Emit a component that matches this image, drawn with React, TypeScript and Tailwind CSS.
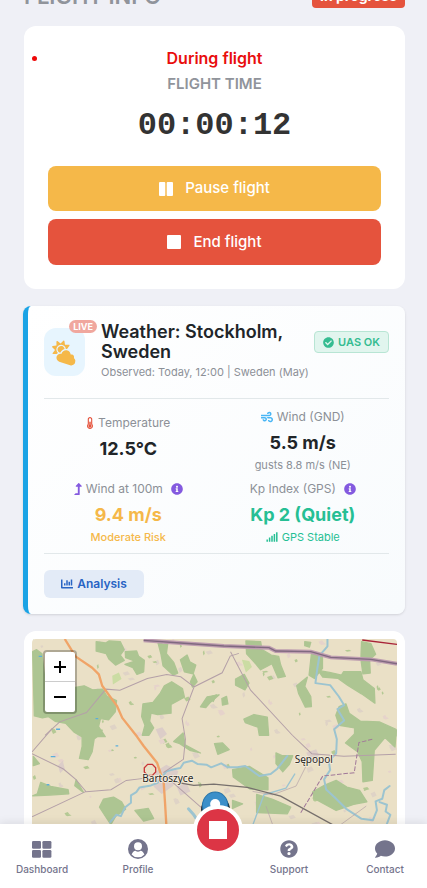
import React from "react";
import {
  FaChartBar,
  FaCheckCircle,
  FaCloudSun,
  FaComment,
  FaInfoCircle,
  FaLevelUpAlt,
  FaQuestionCircle,
  FaSignal,
  FaThermometerHalf,
  FaWind,
} from "react-icons/fa";

// Small woods and farm plots scattered over the base map
const specks = Array.from({ length: 170 }, (_, i) => ({
  x: (i * 397 + (i % 7) * 61) % 1085,
  y: (i * 211 + (i % 11) * 37) % 555,
  w: 4 + ((i * 13) % 12),
  h: 4 + ((i * 7) % 9),
  fill: i % 3 === 0 ? "#b4c994" : i % 3 === 1 ? "#e6d3cb" : "#dfd3c6",
}));

const MapView = () => (
  <svg viewBox="0 0 1092 900" className="block w-full" role="img" aria-label="Flight area map">
    <rect width="1092" height="900" fill="#eae0c6" />
    {specks.map((s, i) => (
      <path
        key={i}
        d={`M${s.x} ${s.y}l${s.w} ${-s.h / 2}l${s.w / 2} ${s.h}l${-s.w} ${s.h / 2}z`}
        fill={s.fill}
      />
    ))}

    {/* Forests */}
    <g fill="#adc592" stroke="#adc592" strokeWidth="4" strokeLinejoin="round">
      <g transform="translate(-36 -42)">
        <path d="M38 80l12-6 16 12 10 90-4 80 30-10 6-60 40 4 44-8 25 12 30-2 14 22 28 12-4 34-20 24-24-4-6 24 20 30-70 0-24-14-24-26-32-6-20-14-18 4-24-6z" />
        <path d="M228 50l28 4 10-6 34 2 12 24-12 16 12 16-26 14-20-18-8-16-30-8zM315 80l34-2 6 16 17 12-2 34-20 8-12-20-24-10 30-10-28-10zM412 50l16 8 14-2-4 30 22 26 12 32-14 6-30-28-6-34zM480 104l20-14 8 20 18 10-8 26-26-6zM420 204l12-22 22-12 32 20 6 26-40 22 0 26-40 4-20-4-4 24 12 20-14 22-20 0 8-30-10-26 4-38 30-4zM540 245l20-30 36-6-26 22-14 16zM510 170l10-22 10 22-14 16z" />
      </g>
      <g transform="translate(534 -42)">
        <path d="M106 48l44 2 4 24 28 16 22 4 6 26 14 34-22 4-18-42-34 18-20-24-22-24zM302 86l33 0 0 44-24 30-16-10zM258 182l32-26-8 28 18 30 2 30-18 2-20-40zM322 136l34 6 36 8 6-10 52 0 6 24 34 26 2 44-40-28-42-26-28-20-46-4zM452 50l28 6 14 32-18 16 2 40-22 2-6-44zM75 162l26-14 14 26-12 20-28-14zM100 282l30-14 40 8 4 54-28 0-4-24-38-14zM385 244l20-8 10 28 34 24 56 2 50 22 0 20-124 0 0-24-46-8-10-30zM0 215l18-6-10 20zM282 50l18 2-4 14-14-4zM34 220l14-6 4 22-16 4z" />
      </g>
      <g transform="translate(-96 273)">
        <path d="M246 0l60 0-6 12-18 14-6 38-12 24-26-4 8-36zM100 78l18 22-18 6zM112 190l10-34 30 12 52 10 2 12-56 4-52 2zM228 148l22 38-26-20zM310 206l30-6 24 14 12 22-30 22-14 24-20-30-14-22zM404 240l40-6 16 30-30 8zM520 34l28-26 6 36 46 24-32-8-30-20z" />
      </g>
      <g transform="translate(540 273)">
        <path d="M60 118l50-10 56 34 0 36-54-2-50-36zM190 68l18 8 32 0-10 26-20 22-20-24zM300 184l36-20 34-14 32 20 38 10 22 34-40 8-52 18-66-36zM398 38l38-38 114 0-4 50-30-28-32 38-6 90-28 4-2-60-14-30zM132 192l46 14 56 24-10 20-92-4zM60 210l30 10-30 14zM6 40l24-2 20 20-34 14z" />
      </g>
    </g>
    <path d="M240 110l20-10 8 20-26 16zM628 62l22 4 8 18-18 16z" fill="#cbdca3" />

    {/* Built-up areas */}
    <g fill="#dccdc8">
      <path d="M368 398l34-22 36 20-16 44-34 24-24-22zM432 440l30-10 12 26-30 12zM820 340l30-10 14 28-26 12zM370 270l20-6 14 20-20 16zM78 378l14-14 6 24-14 14z" />
    </g>

    {/* Rivers */}
    <g fill="none" stroke="#9cc4d0" strokeWidth="6" strokeLinejoin="round" strokeLinecap="round">
      <path d="M884 0l0 22-24 28-6 36-6 46 44 6 26 34 16 26-20 12 20 34-30 26 8 30-2 42-22 24 4 26-18 28 6 30 26 24 34 34 46 30 34 4 12-30-4-26 20-8 6-26 16-12" />
      <path d="M1040 488l22 8-4 20 14 10-12 32" />
      <path d="M234 548l18-22 14 4 12-26 18-14 0-22 16-10 10-14 34-6 20-8 26-34 22-6 20-4 10-16 24-6 18 10 26 2 14 8 30-12 20 12 28 0 24-4 20 14 22 16 34-6 20-16 30-38" />
      <path d="M786 404l-26 42-66 20-34 92" strokeWidth="4" />
      <path d="M468 508l16 18 8 12" strokeWidth="9" />
    </g>
    <path d="M20 52h10M190 238h8M72 270h12M56 352h14M44 436h8M250 320h8" stroke="#5caedb" strokeWidth="4" />

    {/* Local roads */}
    <g fill="none" stroke="#b4a0a8" strokeWidth="3">
      <path d="M39 288l44-40 80-28 58-70 42 3 82-35 58-12 42 7 40 30 84-42 24-50 26-8M485 143l-36 95 10 62-6 60-60 40" />
      <path d="M594 38l60 115 125 135 58 55 96 8 155-6M0 343l94 46 36 30 32 38 74-6 46-28 52-6M0 532l162-76M404 414l100 88 110 40M0 338l60-70" />
      <path d="M660 456l60 10 70-26 40-80M700 500l20 56M1000 500l-80 58" strokeWidth="2" />
      <path d="M804 520l66-110 94-10 14-90 40-10" stroke="#a17899" strokeDasharray="14 5" />
    </g>
    <path d="M404 424l80 14 60-4 100 10 100 26 160 88" fill="none" stroke="#77706d" strokeWidth="4" />

    {/* Border strip along the north edge */}
    <path d="M334 4l110 8 130 9 135 5 20 10 105 2 60 17 120 6 78 13" fill="none" stroke="#bd9caf" strokeWidth="12" />
    <path d="M334 4l110 8 130 9 135 5 20 10 105 2 60 17 120 6 78 13" fill="none" stroke="#806980" strokeWidth="4" />
    <path d="M988 3l104 13" stroke="#a82338" strokeWidth="4" />

    {/* Main road */}
    <path
      d="M98 0l32 52 50 34 20 20 10 34 44 60 16 36 44 56 20 28 40 50 20 60 4 60 4 68"
      fill="none"
      stroke="#f0a468"
      strokeWidth="7"
      strokeLinejoin="round"
    />
    <path d="M346 375h14l10 10v13l-10 10h-14l-10-10v-13z" fill="none" stroke="#cb3538" strokeWidth="4" />

    <g fontFamily="Noto Sans, sans-serif" fontSize="30" fill="#272522" stroke="#f5eddf" strokeWidth="5" paintOrder="stroke">
      <text x="330" y="428">Bartoszyce</text>
      <text x="786" y="370">Sępopol</text>
    </g>

    {/* Pilot marker */}
    <path d="M506 510a43 43 0 0 1 86 0l-4 30h-78z" fill="#15252e" />
    <path d="M548 580c-14-30-38-48-38-82a38 40 0 0 1 76 0c0 34-24 52-38 82z" fill="#3b8fc9" stroke="#2673a8" strokeWidth="3" />
    <circle cx="548" cy="494" r="15" fill="#fff" />
  </svg>
);

const DashboardIcon = () => (
  <svg viewBox="0 0 20 17" className="h-[17px] w-5" fill="currentColor">
    <rect width="9" height="7.7" rx="1.3" />
    <rect x="10.4" width="9" height="7.7" rx="1.3" />
    <rect y="9" width="9" height="7.7" rx="1.3" />
    <rect x="10.4" y="9" width="9" height="7.7" rx="1.3" />
  </svg>
);

const ProfileIcon = () => (
  <svg viewBox="0 0 20 20" className="h-5 w-5">
    <circle cx="10" cy="10" r="10" fill="currentColor" />
    <path d="M3.6 15.4C4.5 13 6 12 7.5 11.7a4 4 0 0 0 5 0c1.5.3 3 1.3 3.9 3.7A8.4 8.4 0 0 1 3.6 15.4z" fill="#fff" />
    <circle cx="10" cy="7.3" r="4" fill="#fff" />
  </svg>
);

const navItems = [
  { href: "#dashboard", label: "Dashboard", icon: <DashboardIcon /> },
  { href: "#profile", label: "Profile", icon: <ProfileIcon /> },
  { href: "#support", label: "Support", icon: <FaQuestionCircle className="h-[18px] w-[18px]" /> },
  { href: "#contact", label: "Contact", icon: <FaComment className="h-5 w-5" /> },
];

const NavLink = ({ item }: { item: (typeof navItems)[number] }) => (
  <a href={item.href} className="flex w-[84px] flex-col items-center gap-0.5 text-[#74748c]">
    <span className="flex h-5 items-center">{item.icon}</span>
    <span className="text-[10px] leading-4 font-medium">{item.label}</span>
  </a>
);

const App = () => {
  return (
    <div className="flex h-screen flex-col overflow-hidden bg-[#eff0f6] font-['Inter',sans-serif] text-[#212529]">
      <main className="-mt-5 min-h-0 flex-1 overflow-hidden pr-[22px] pl-6">
        <header className="flex h-7 items-end justify-between">
          <h1 className="text-[22px] leading-6 font-semibold text-[#90949b]">FLIGHT INFO</h1>
          <span className="rounded bg-[#e5533d] px-2 pt-1.5 pb-0.5 text-sm leading-5 font-bold text-white">In progress</span>
        </header>

        {/* Flight timer */}
        <section className="relative mt-[18px] rounded-xl bg-white px-6 pt-5 pb-6 text-center">
          <span className="absolute top-[30px] left-2 h-[5px] w-[5px] rounded-full bg-[#ee0808]" />
          <p className="text-base leading-6 font-semibold text-[#e90d0d]">During flight</p>
          <h2 className="mt-0.5 text-[15px] leading-6 font-semibold text-[#90949b]">FLIGHT TIME</h2>
          <p className="mt-[10px] font-['Liberation_Mono',monospace] text-[32px] leading-10 font-bold text-[#333]">00:00:12</p>
          <div className="mt-5 flex flex-col gap-2">
            <button className="flex h-[45px] items-center justify-center gap-3 rounded-lg bg-[#f5b849] text-[15px] font-medium text-white">
              <svg viewBox="0 0 14 14" className="h-3.5 w-3.5" fill="currentColor">
                <rect width="6.3" height="14" rx="1" />
                <rect x="7.7" width="6.3" height="14" rx="1" />
              </svg>
              Pause flight
            </button>
            <button className="flex h-[46px] items-center justify-center gap-3 rounded-lg bg-[#e5533d] text-[15px] font-medium text-white">
              <svg viewBox="0 0 14 14" className="h-3.5 w-3.5" fill="currentColor">
                <rect width="14" height="14" rx="1" />
              </svg>
              End flight
            </button>
          </div>
        </section>

        {/* Weather */}
        <section className="mt-[17px] -ml-px rounded-lg border-l-[5px] border-[#1aa3e5] bg-gradient-to-br from-white to-[#f8fbfd] p-4 shadow-sm">
          <div className="flex items-center pb-4">
            <div className="relative flex h-12 w-[41px] shrink-0 items-center justify-center rounded-xl bg-[#e7f5fe]">
              <FaCloudSun className="h-6 w-[27px] rotate-[18deg] text-[#f5b849]" />
              <span className="absolute -top-2 -right-3 rounded-full bg-[#f0a79e] px-1 text-[9px] leading-[13px] font-bold text-white">
                LIVE
              </span>
            </div>
            <div className="ml-4 min-w-0 flex-1">
              <div className="flex items-center justify-between">
                <h3 className="text-lg leading-5 font-semibold">
                  Weather: Stockholm,
                  <br />
                  Sweden
                </h3>
                <span className="flex h-[22px] shrink-0 items-center gap-1 rounded border border-[#b8e5d4] bg-[#e1f5ee] px-2 text-[11px] font-semibold text-[#35bc91]">
                  <FaCheckCircle className="h-[11px] w-[11px]" />
                  UAS OK
                </span>
              </div>
              <p className="text-[11px] leading-5 whitespace-nowrap text-[#8c9097]">Observed: Today, 12:00 | Sweden (May)</p>
            </div>
          </div>

          <div className="grid grid-cols-2 gap-y-2 border-y border-[#e2e8ea] pt-2 pb-[10px] text-center">
            <div className="flex flex-col justify-center pr-1">
              <p className="flex items-center justify-center gap-1 text-xs leading-5 text-[#8c9097]">
                <FaThermometerHalf className="h-3 w-2 text-[#e5533d]" />
                Temperature
              </p>
              <p className="text-lg leading-8 font-bold">12.5°C</p>
            </div>
            <div>
              <p className="flex items-center justify-center gap-1 text-xs leading-5 text-[#8c9097]">
                <FaWind className="h-3 w-3 text-[#49b6f5]" />
                Wind (GND)
              </p>
              <p className="text-lg leading-8 font-bold">5.5 m/s</p>
              <p className="text-[11px] leading-3 text-[#8c9097]">gusts 8.8 m/s (NE)</p>
            </div>
            <div className="pr-1">
              <p className="flex items-center justify-center gap-1 text-xs leading-5 text-[#8c9097]">
                <FaLevelUpAlt className="h-3 w-2 text-[#845adf]" />
                Wind at 100m
                <FaInfoCircle className="ml-1 h-3 w-3 text-[#845adf]" />
              </p>
              <p className="text-lg leading-8 font-bold text-[#f5b849]">9.4 m/s</p>
              <p className="text-[11px] leading-3 font-medium text-[#f5b849]">Moderate Risk</p>
            </div>
            <div>
              <p className="flex items-center justify-center gap-1 text-xs leading-5 text-[#8c9097]">
                Kp Index (GPS)
                <FaInfoCircle className="ml-1 h-3 w-3 text-[#845adf]" />
              </p>
              <p className="text-lg leading-8 font-bold text-[#26bf94]">Kp 2 (Quiet)</p>
              <p className="flex items-center justify-center gap-1 text-[11px] leading-3 text-[#26bf94]">
                <FaSignal className="h-[10px] w-3" />
                GPS Stable
              </p>
            </div>
          </div>

          <button className="mt-4 flex h-7 w-[100px] items-center justify-center gap-1 rounded-md bg-[#e3ebf7] text-xs font-semibold text-[#2864c4]">
            <FaChartBar className="h-3 w-3" />
            Analysis
          </button>
        </section>

        {/* Map */}
        <section className="mt-[17px] rounded-xl bg-white p-2">
          <div className="relative overflow-hidden rounded">
            <MapView />
            <div className="absolute top-[11px] left-[11px] flex flex-col rounded border-2 border-black/25 bg-white bg-clip-padding text-black">
              <button aria-label="Zoom in" className="flex h-[30px] w-[30px] items-center justify-center border-b border-[#ccc]">
                <svg viewBox="0 0 12 12" className="h-3 w-3" stroke="currentColor" strokeWidth="2">
                  <path d="M0 6h12M6 0v12" />
                </svg>
              </button>
              <button aria-label="Zoom out" className="flex h-[30px] w-[30px] items-center justify-center">
                <svg viewBox="0 0 12 12" className="h-3 w-3" stroke="currentColor" strokeWidth="2">
                  <path d="M0 6h12" />
                </svg>
              </button>
            </div>
          </div>
        </section>
      </main>

      {/* Bottom navigation */}
      <nav className="relative flex h-16 shrink-0 items-center justify-between bg-white pt-1 shadow-[0_-2px_8px_rgba(0,0,0,0.08)]">
        <div className="flex gap-3">
          {navItems.slice(0, 2).map((item) => (
            <NavLink key={item.href} item={item} />
          ))}
        </div>
        <div className="flex gap-3">
          {navItems.slice(2).map((item) => (
            <NavLink key={item.href} item={item} />
          ))}
        </div>
        <button
          aria-label="Stop flight"
          className="absolute -top-[19px] left-[51%] flex h-[50px] w-[50px] -translate-x-1/2 items-center justify-center rounded-full border-4 border-white bg-[#dc3545]"
        >
          <span className="h-[18px] w-[18px] bg-white" />
        </button>
      </nav>
    </div>
  );
};

export default App;
